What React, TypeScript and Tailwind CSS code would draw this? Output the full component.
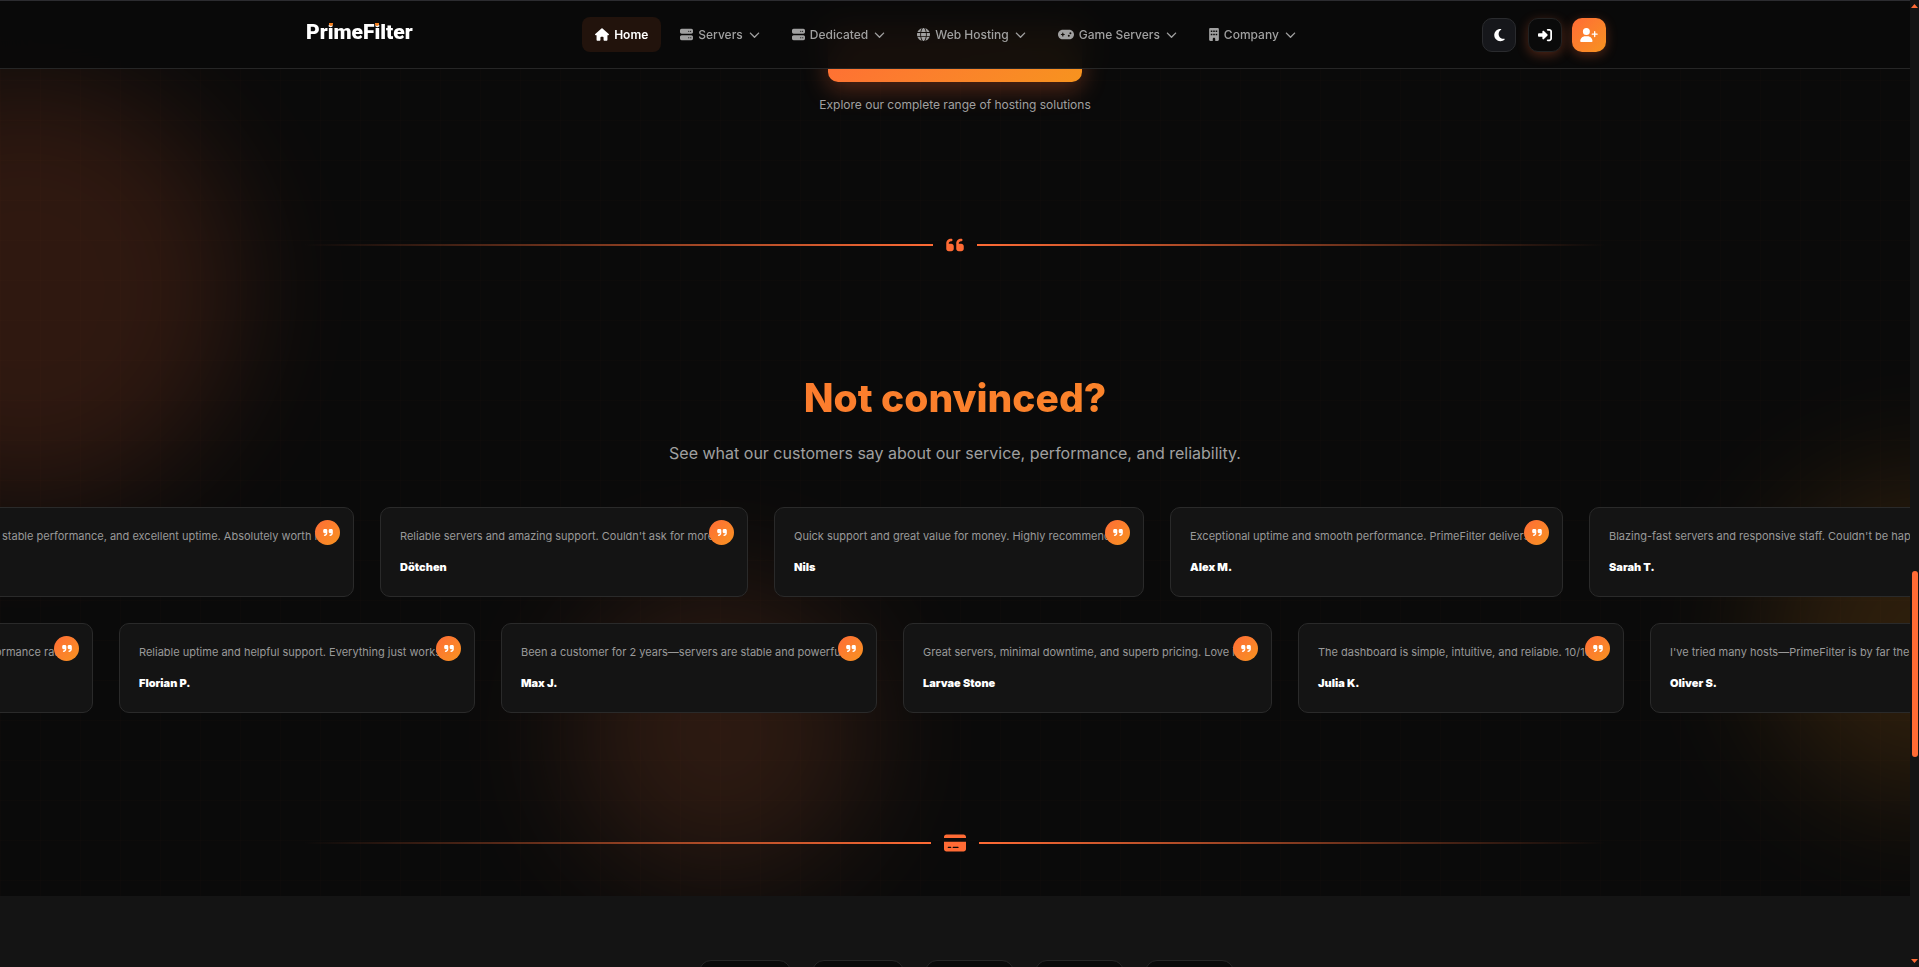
import type { ReactNode } from "react";
import {
  FaBuilding,
  FaChevronDown,
  FaCreditCard,
  FaGamepad,
  FaGlobe,
  FaHouse,
  FaMoon,
  FaQuoteLeft,
  FaQuoteRight,
  FaRightToBracket,
  FaServer,
  FaUserPlus,
} from "react-icons/fa6";

type Review = { text: string; name?: string; width: string };

const navItems: { label: string; icon: ReactNode }[] = [
  { label: "Servers", icon: <FaServer className="h-[13px] w-[13px]" /> },
  { label: "Dedicated", icon: <FaServer className="h-[13px] w-[13px]" /> },
  { label: "Web Hosting", icon: <FaGlobe className="h-[13px] w-[13px]" /> },
  { label: "Game Servers", icon: <FaGamepad className="h-[13px] w-[16px]" /> },
  { label: "Company", icon: <FaBuilding className="h-[13px] w-[10px]" /> },
];

const topRow: Review[] = [
  { text: "stable performance, and excellent uptime. Absolutely worth it.", width: "w-[372px]" },
  { text: "Reliable servers and amazing support. Couldn't ask for more.", name: "Dötchen", width: "w-[368px]" },
  { text: "Quick support and great value for money. Highly recommended.", name: "Nils", width: "w-[370px]" },
  { text: "Exceptional uptime and smooth performance. PrimeFilter delivers.", name: "Alex M.", width: "w-[393px]" },
  { text: "Blazing-fast servers and responsive staff. Couldn't be happier.", name: "Sarah T.", width: "w-[384px]" },
];

const bottomRow: Review[] = [
  { text: "The best price and performance ratio.", width: "w-[240px]" },
  { text: "Reliable uptime and helpful support. Everything just works.", name: "Florian P.", width: "w-[356px]" },
  { text: "Been a customer for 2 years—servers are stable and powerful.", name: "Max J.", width: "w-[376px]" },
  { text: "Great servers, minimal downtime, and superb pricing. Love it.", name: "Larvae Stone", width: "w-[369px]" },
  { text: "The dashboard is simple, intuitive, and reliable. 10/10.", name: "Julia K.", width: "w-[326px]" },
  { text: "I've tried many hosts—PrimeFilter is by far the best.", name: "Oliver S.", width: "w-[320px]" },
];

const planTabs = ["w-[92px]", "w-[92px]", "w-[89px]", "w-[89px]", "w-[89px]"];

function DottedI() {
  return (
    <span className="relative">
      i
      <span className="absolute top-[3px] left-1/2 h-[3px] w-[4px] -translate-x-1/2 rounded-b-full bg-[#f7811e]" />
    </span>
  );
}

function Logo() {
  return (
    <a
      href="#"
      className="flex h-9 w-[105px] items-center pb-1 pl-[2px] font-[Roboto,sans-serif] text-[21px] leading-none font-black text-white"
    >
      <span>
        Pr
        <DottedI />
        meF
        <DottedI />
        lter
      </span>
    </a>
  );
}

function Header() {
  return (
    <header className="absolute inset-x-0 top-0 z-20 border-t border-b border-t-[#2c2c30] border-b-[#262626] bg-[#0a0a0a]/95 backdrop-blur-lg">
      <div className="mx-auto flex h-[67px] max-w-[1302px] items-center justify-between">
        <Logo />
        <nav className="flex items-center gap-[6px] text-[12px] leading-4 font-medium text-[#a0a0a0]">
          <a href="#" className="flex h-[35px] items-center gap-[5px] rounded-lg bg-[#22130c] px-[13px] font-semibold text-white">
            <FaHouse className="h-[13px] w-[14px]" />
            Home
          </a>
          {navItems.map((item) => (
            <button key={item.label} type="button" className="flex h-[35px] items-center gap-[5px] px-[13px]">
              {item.icon}
              {item.label}
              <FaChevronDown className="ml-px h-[13px] w-[11px]" />
            </button>
          ))}
        </nav>
        <div className="flex items-center text-white">
          <button
            type="button"
            aria-label="Toggle theme"
            className="flex size-[34px] items-center justify-center rounded-[10px] border border-[#2a2b2e] bg-[#16171b]"
          >
            <FaMoon className="h-[14px] w-[11px]" />
          </button>
          <a
            href="#"
            aria-label="Log in"
            className="ml-3 flex size-[34px] items-center justify-center rounded-[10px] border border-[#222] bg-[#0a0a0a] shadow-[0_3px_12px_rgba(255,107,53,0.3)]"
          >
            <FaRightToBracket className="h-[14px] w-[14px]" />
          </a>
          <a
            href="#"
            aria-label="Register"
            className="ml-[10px] flex size-[34px] items-center justify-center rounded-[10px] bg-linear-135 from-[#ff6b35] to-[#f7931e] shadow-[0_3px_12px_rgba(255,107,53,0.3)]"
          >
            <FaUserPlus className="h-[14px] w-[18px]" />
          </a>
        </div>
      </div>
    </header>
  );
}

function Divider({ children }: { children: ReactNode }) {
  return (
    <div className="mx-auto flex h-5 max-w-[1302px] items-center gap-[13px] text-[#ff6b35]">
      <span className="h-[2px] flex-1 bg-linear-to-r from-transparent to-[#ff6b35]" />
      {children}
      <span className="h-[2px] flex-1 bg-linear-to-l from-transparent to-[#ff6b35]" />
    </div>
  );
}

function ReviewCard({ review }: { review: Review }) {
  return (
    <article
      className={"relative h-[90px] shrink-0 rounded-[10px] border border-[#2a2a2a] bg-[#141414] px-[19px] pt-[19px] " + review.width}
    >
      <p className="text-[11px] leading-[18px] whitespace-nowrap text-[#999]">{review.text}</p>
      {review.name && (
        <p className="mt-[13px] text-[11px] leading-[18px] font-black text-white">{review.name}</p>
      )}
      <span className="absolute top-3 right-[13px] flex size-[25px] items-center justify-center rounded-full bg-linear-135 from-[#ff6b35] to-[#f7931e] text-white">
        <FaQuoteRight className="h-[11px] w-[10px]" />
      </span>
    </article>
  );
}

function ReviewRow({ reviews, lead }: { reviews: Review[]; lead: string }) {
  const [first, ...rest] = reviews;
  return (
    <div className="flex gap-[26px] overflow-hidden">
      <div className={"flex shrink-0 justify-end " + lead}>
        <ReviewCard review={first} />
      </div>
      {rest.map((r) => (
        <ReviewCard key={r.name} review={r} />
      ))}
    </div>
  );
}

function Backdrop() {
  return (
    <div className="pointer-events-none absolute inset-0 overflow-hidden">
      <div className="absolute inset-0 bg-[linear-gradient(rgba(255,107,53,0.01)_1px,transparent_1px),linear-gradient(90deg,rgba(255,107,53,0.01)_1px,transparent_1px)] bg-size-[40px_40px]" />
      <div className="absolute top-[75px] -left-[190px] size-[430px] rounded-full bg-[#ff6b35] opacity-15 blur-[60px]" />
      <div className="absolute top-[585px] left-[572px] size-[296px] rounded-full bg-[#ff7b40] opacity-14 blur-[64px]" />
      <div className="absolute top-[480px] -right-[175px] size-[320px] rounded-full bg-[#f7931e] opacity-15 blur-[64px]" />
    </div>
  );
}

function ScrollRail() {
  return (
    <div className="flex w-[9px] shrink-0 flex-col items-center bg-[#141414] py-1">
      <svg width="7" height="4" viewBox="0 0 7 4" fill="#ff6b35">
        <path d="M0 4 3.5 0 7 4z" />
      </svg>
      <div className="flex w-full grow flex-col pl-[2px]">
        <span className="grow-[563]" />
        <span className="w-[6px] grow-[186] rounded-full bg-[#ff6b35]" />
        <span className="grow-[202]" />
      </div>
      <svg width="7" height="4" viewBox="0 0 7 4" fill="#ff6b35">
        <path d="M0 0h7L3.5 4z" />
      </svg>
    </div>
  );
}

export default function App() {
  return (
    <div className="flex h-screen overflow-hidden bg-[#0a0a0a] font-[Inter,sans-serif]">
      <div className="relative flex min-w-0 grow flex-col overflow-hidden">
        <Header />
        <Backdrop />
        <main className="relative flex grow flex-col">
          <section className="flex flex-col items-center pt-[26px]">
            <button
              type="button"
              aria-label="Explore"
              className="h-14 w-[254px] rounded-[10px] bg-linear-135 from-[#ff6b35] to-[#f7931e] shadow-[0_8px_25px_rgba(255,107,53,0.3)]"
            />
            <p className="mt-[13px] text-[12px] leading-5 text-[#a0a0a0]">Explore our complete range of hosting solutions</p>
          </section>
          <div className="mt-[120px]">
            <Divider>
              <FaQuoteLeft className="h-5 w-[18px]" />
            </Divider>
          </div>
          <section className="mt-[119px]">
            <h2 className="bg-linear-135 from-[#ff6b35] to-[#f7931e] bg-clip-text text-center text-[39px] leading-[48px] font-extrabold text-transparent">
              Not convinced?
            </h2>
            <p className="mt-[19px] text-center text-[16px] leading-6 text-[#a0a0a0]">
              See what our customers say about our service, performance, and reliability.
            </p>
            <div className="mt-[42px] flex flex-col gap-[26px]">
              <ReviewRow reviews={topRow} lead="w-[354px]" />
              <ReviewRow reviews={bottomRow} lead="w-[93px]" />
            </div>
          </section>
          <div className="mt-[120px]">
            <Divider>
              <FaCreditCard className="h-5 w-[22px]" />
            </Divider>
          </div>
          <section className="mt-[43px] flex grow justify-center gap-[21px] bg-[#141414] pt-16 pl-[22px]">
            {planTabs.map((width, i) => (
              <button
                key={i}
                type="button"
                aria-label={`Plan ${i + 1}`}
                className={"h-12 rounded-xl border border-[#262626] bg-[#0a0a0a] " + width}
              />
            ))}
          </section>
        </main>
      </div>
      <ScrollRail />
    </div>
  );
}
